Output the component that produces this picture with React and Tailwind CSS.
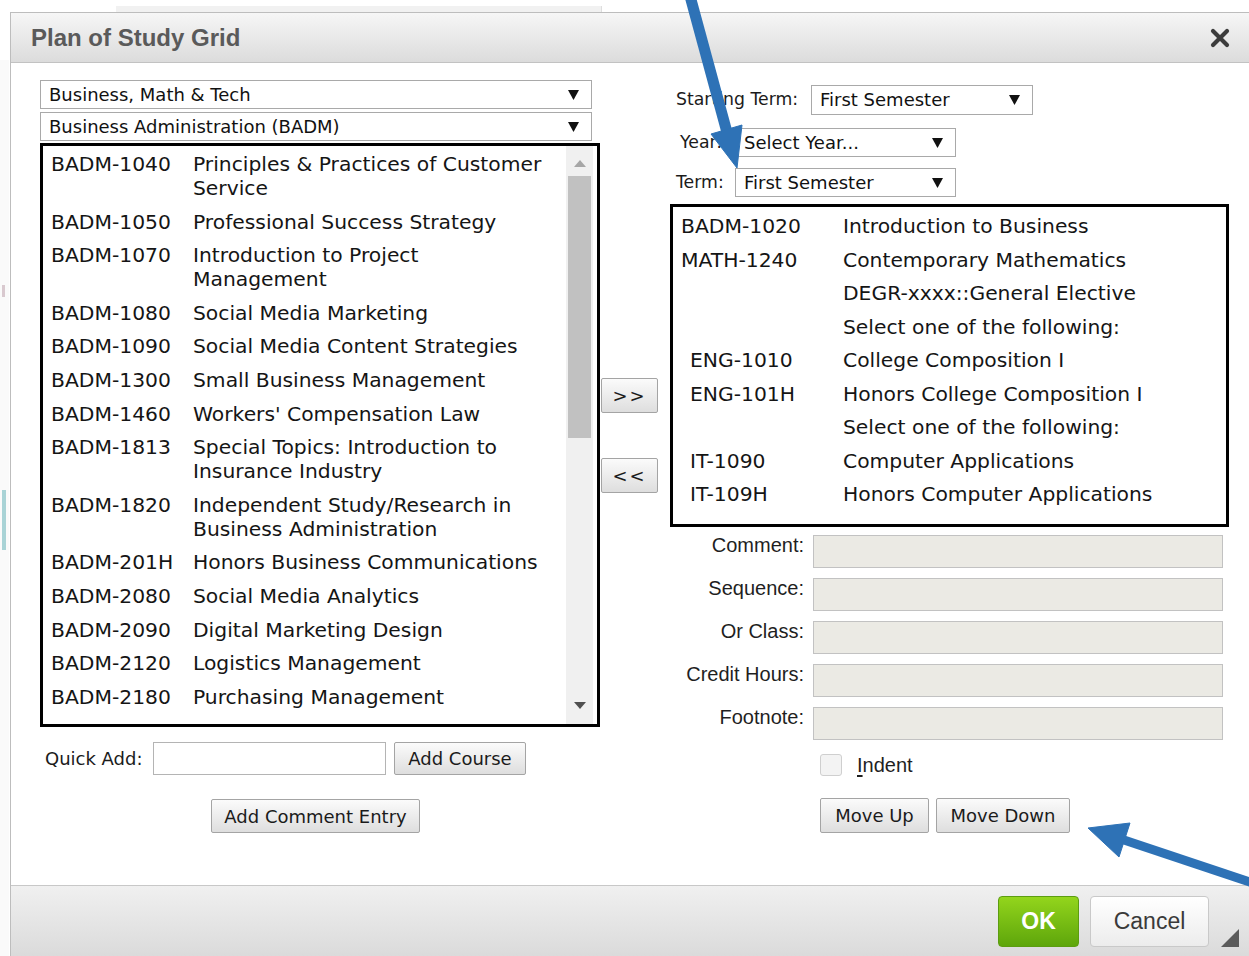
import React from "react";

const SANS = "font-['DejaVu_Sans',Verdana,sans-serif]";
const ARIAL = "font-['Liberation_Sans',Arial,sans-serif]";

const available = [
    ["BADM-1040", "Principles & Practices of Customer Service"],
    ["BADM-1050", "Professional Success Strategy"],
    ["BADM-1070", "Introduction to Project Management"],
    ["BADM-1080", "Social Media Marketing"],
    ["BADM-1090", "Social Media Content Strategies"],
    ["BADM-1300", "Small Business Management"],
    ["BADM-1460", "Workers' Compensation Law"],
    ["BADM-1813", "Special Topics: Introduction to Insurance Industry"],
    ["BADM-1820", "Independent Study/Research in Business Administration"],
    ["BADM-201H", "Honors Business Communications"],
    ["BADM-2080", "Social Media Analytics"],
    ["BADM-2090", "Digital Marketing Design"],
    ["BADM-2120", "Logistics Management"],
    ["BADM-2180", "Purchasing Management"],
];

const termCourses = [
    { code: "BADM-1020", title: "Introduction to Business" },
    { code: "MATH-1240", title: "Contemporary Mathematics" },
    { code: "", title: "DEGR-xxxx::General Elective" },
    { code: "", title: "Select one of the following:" },
    { code: "ENG-1010", title: "College Composition I", option: true },
    { code: "ENG-101H", title: "Honors College Composition I", option: true },
    { code: "", title: "Select one of the following:" },
    { code: "IT-1090", title: "Computer Applications", option: true },
    { code: "IT-109H", title: "Honors Computer Applications", option: true },
];

const fields = ["Comment:", "Sequence:", "Or Class:", "Credit Hours:", "Footnote:"];

const Caret = () => (
    <svg width="11" height="10" viewBox="0 0 11 10" className="shrink-0">
        <path d="M0 0 H11 L5.5 10 Z" fill="#111" />
    </svg>
);

const Dropdown = ({ value, className }) => (
    <div className={`flex items-center justify-between bg-white border border-[#a9a9a9] pl-[8px] pr-[12px] text-[18px] text-[#111] ${SANS} ${className}`}>
        <span className="leading-none">{value}</span>
        <Caret />
    </div>
);

const Button = ({ children, className = "" }) => (
    <button className={`flex items-center justify-center bg-gradient-to-b from-[#fbfbfb] to-[#dedede] border border-[#a4a4a4] rounded-[2px] text-[18px] text-[#1b1b1b] ${SANS} ${className}`}>
        {children}
    </button>
);

const CourseList = () => (
    <div className="flex h-[584px] w-[560px] border-[3px] border-black bg-white">
        <div className="flex-1 overflow-hidden pt-[1px]">
            {available.map(([code, title]) => (
                <div key={code} className={`flex pl-[8px] pt-[5px] pb-[4.6px] text-[20.3px] leading-[24px] text-[#151515] ${SANS}`}>
                    <span className="w-[142px] shrink-0">{code}</span>
                    <span className="w-[360px]">{title}</span>
                </div>
            ))}
        </div>
        <div className="relative w-[27px] mr-[4px] bg-[#f0f0f0]">
            <svg width="12" height="7" viewBox="0 0 12 7" className="absolute left-[8px] top-[14px]">
                <path d="M0 7 L6 0 L12 7 Z" fill="#a6a6a6" />
            </svg>
            <div className="absolute left-[2px] right-[2px] top-[30px] h-[262px] bg-[#c1c1c1]" />
            <svg width="12" height="7" viewBox="0 0 12 7" className="absolute left-[8px] bottom-[15px]">
                <path d="M0 0 H12 L6 7 Z" fill="#505050" />
            </svg>
        </div>
    </div>
);

const TermList = () => (
    <div className="h-[323px] w-[559px] border-[3px] border-black bg-white pt-[2px]">
        {termCourses.map((c, i) => (
            <div key={i} className={`flex pt-[5px] pb-[4.5px] text-[20.3px] leading-[24px] text-[#151515] ${SANS}`}>
                <span className={`w-[170px] shrink-0 ${c.option ? "pl-[17px]" : "pl-[8px]"}`}>{c.code}</span>
                <span>{c.title}</span>
            </div>
        ))}
    </div>
);

const Arrows = () => (
    <svg width="1249" height="956" className="absolute inset-0 pointer-events-none">
        <g fill="#2e72b6" stroke="#2e72b6">
            <line x1="690" y1="-4" x2="728" y2="136" strokeWidth="11" />
            <polygon points="737,168 742,125 711,134" strokeWidth="1" strokeLinejoin="round" />
            <line x1="1256" y1="884" x2="1118" y2="838" strokeWidth="9" />
            <polygon points="1088,828 1130,823 1119,857" strokeWidth="1" strokeLinejoin="round" />
        </g>
    </svg>
);

const App = () => {
    return (
        <div className="relative w-[1249px] h-[956px] overflow-hidden bg-white">
            {/* page content peeking out behind the dialog */}
            <div className="absolute left-[116px] top-[6px] w-[486px] h-[8px] bg-[#f1f1f1] border-r border-[#dedede]" />
            <div className="absolute left-0 top-[60px] w-[9px] h-[896px] bg-[#fafafa]" />
            <div className="absolute left-[2px] top-[285px] w-[3px] h-[12px] bg-[#d9c9cf]" />
            <div className="absolute left-[2px] top-[490px] w-[4px] h-[60px] bg-[#a9d3d6]" />

            <div className="relative ml-[10px] mt-[12px] w-[1245px] h-[960px] flex flex-col border border-[#bdbdbd] bg-white">
                {/* title bar */}
                <div className="flex items-center justify-between h-[50px] pl-[20px] pr-[24px] bg-gradient-to-b from-[#f6f6f6] to-[#dcdcdc] border-b border-[#c2c2c2]">
                    <span className={`text-[24px] font-bold text-[#5a5a5a] ${ARIAL}`}>Plan of Study Grid</span>
                    <svg width="20" height="20" viewBox="0 0 20 20">
                        <path d="M3 3 L17 17 M17 3 L3 17" stroke="#3c3c3c" strokeWidth="4.2" strokeLinecap="round" />
                    </svg>
                </div>

                {/* body */}
                <div className="flex h-[822px] pl-[29px] pt-[17px]">
                    {/* left column: course catalog */}
                    <div className="flex flex-col w-[560px]">
                        <Dropdown value="Business, Math & Tech" className="w-[552px] h-[29px]" />
                        <Dropdown value="Business Administration (BADM)" className="w-[552px] h-[29px] mt-[3px]" />
                        <div className="mt-[2px]">
                            <CourseList />
                        </div>
                        <div className="flex items-center mt-[15px]">
                            <span className={`ml-[5px] w-[108px] text-[18px] text-[#1b1b1b] ${SANS}`}>Quick Add:</span>
                            <input className="w-[233px] h-[33px] border border-[#b4b4b4] bg-white" />
                            <Button className="ml-[8px] w-[132px] h-[33px]">Add Course</Button>
                        </div>
                        <Button className="ml-[171px] mt-[24px] w-[209px] h-[34px]">Add Comment Entry</Button>
                    </div>

                    {/* move buttons */}
                    <div className="flex flex-col ml-[1px] w-[57px]">
                        <Button className="mt-[298px] h-[35px] w-[57px] tracking-[2px]">&gt;&gt;</Button>
                        <Button className="mt-[45px] h-[35px] w-[57px] tracking-[2px]">&lt;&lt;</Button>
                    </div>

                    {/* right column: selected term */}
                    <div className="flex flex-col ml-[12px] w-[560px]">
                        <div className={`flex items-center mt-[5px] text-[17.3px] text-[#1b1b1b] ${SANS}`}>
                            <span className="pl-[6px] w-[141px]">Starting Term:</span>
                            <Dropdown value="First Semester" className="w-[222px] h-[30px] pr-[11px]" />
                        </div>
                        <div className={`flex items-center mt-[13px] text-[17.3px] text-[#1b1b1b] ${SANS}`}>
                            <span className="pl-[10px] w-[65px]">Year:</span>
                            <Dropdown value="Select Year..." className="w-[221px] h-[29px] pr-[11px]" />
                        </div>
                        <div className={`flex items-center mt-[11px] text-[17.3px] text-[#1b1b1b] ${SANS}`}>
                            <span className="pl-[6px] w-[65px]">Term:</span>
                            <Dropdown value="First Semester" className="w-[221px] h-[29px] pr-[11px]" />
                        </div>
                        <div className="mt-[7px]">
                            <TermList />
                        </div>

                        <div className="flex flex-col gap-[10px] mt-[8px]">
                            {fields.map((f) => (
                                <div key={f} className="flex items-start">
                                    <span className={`w-[134px] text-right text-[20px] leading-[20px] text-[#1f1f1f] ${ARIAL}`}>{f}</span>
                                    <div className="ml-[9px] w-[410px] h-[33px] bg-[#ebeae4] border border-[#c2c2c2]" />
                                </div>
                            ))}
                        </div>

                        <div className="flex items-center mt-[14px] ml-[150px]">
                            <div className="w-[22px] h-[22px] rounded-[3px] border border-[#cfcfcf] bg-[#f3f3f3]" />
                            <span className={`ml-[15px] text-[20px] leading-[22px] text-[#1f1f1f] ${ARIAL}`}>
                                <span className="underline underline-offset-[3px]">I</span>ndent
                            </span>
                        </div>

                        <div className="flex mt-[22px] ml-[150px] gap-[7px]">
                            <Button className="w-[109px] h-[35px]">Move Up</Button>
                            <Button className="w-[134px] h-[35px]">Move Down</Button>
                        </div>
                    </div>
                </div>

                {/* footer */}
                <div className="flex flex-1 items-start justify-end pt-[10px] bg-gradient-to-b from-[#f0f0f0] to-[#d6d6d6] border-t border-[#c8c8c8]">
                    <button className={`w-[81px] h-[51px] rounded-[4px] border border-[#5c9d10] bg-gradient-to-b from-[#93d51c] to-[#5ea60b] text-white text-[23px] font-bold ${ARIAL}`}>
                        OK
                    </button>
                    <button className={`ml-[11px] w-[119px] h-[51px] rounded-[4px] border border-[#c9c9c9] bg-gradient-to-b from-white to-[#ececec] text-[#3a3a3a] text-[23px] ${ARIAL}`}>
                        Cancel
                    </button>
                    <div className="w-[45px] h-[51px] flex items-end pl-[12px]">
                        <svg width="18" height="18" viewBox="0 0 18 18">
                            <path d="M18 0 V18 H0 Z" fill="#5b5b5b" />
                        </svg>
                    </div>
                </div>
            </div>

            <Arrows />
        </div>
    );
};

export default App;
